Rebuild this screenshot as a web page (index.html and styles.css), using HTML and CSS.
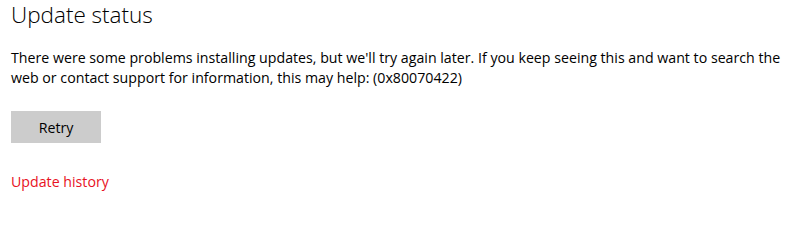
FILE: index.html
```html
<!DOCTYPE html>
<html lang="en">
<head>
<meta charset="utf-8">
<title>Update status</title>
<link rel="stylesheet" href="styles.css">
</head>
<body>
<main class="page">
  <h1 class="title">Update status</h1>
  <p class="message">There were some problems installing updates, but we'll try again later. If you keep seeing this and want to search the web or contact support for information, this may help: (0x80070422)</p>
  <button class="retry" type="button">Retry</button>
  <a class="history" href="#">Update history</a>
</main>
</body>
</html>
```

FILE: styles.css
```css
html, body {
  margin: 0;
  padding: 0;
  background: #ffffff;
}

.page {
  display: flex;
  flex-direction: column;
  align-items: flex-start;
  padding: 0 0 0 11px;
  font-family: "Open Sans", "Noto Sans", sans-serif;
  color: #000000;
}

.title {
  margin: 0;
  padding-top: 1px;
  font-size: 22.5px;
  font-weight: 300;
  line-height: 28px;
}

.message {
  margin: 19px 0 0 0;
  width: 780px;
  font-size: 14.2px;
  line-height: 20px;
}

.retry {
  margin: 23px 0 0 0;
  width: 90px;
  height: 32px;
  border: none;
  background: #cccccc;
  font-family: inherit;
  font-size: 14.2px;
  color: #000000;
  padding: 0;
}

.history {
  margin-top: 29px;
  font-size: 14.2px;
  line-height: 20px;
  color: #e81123;
  text-decoration: none;
}
```
